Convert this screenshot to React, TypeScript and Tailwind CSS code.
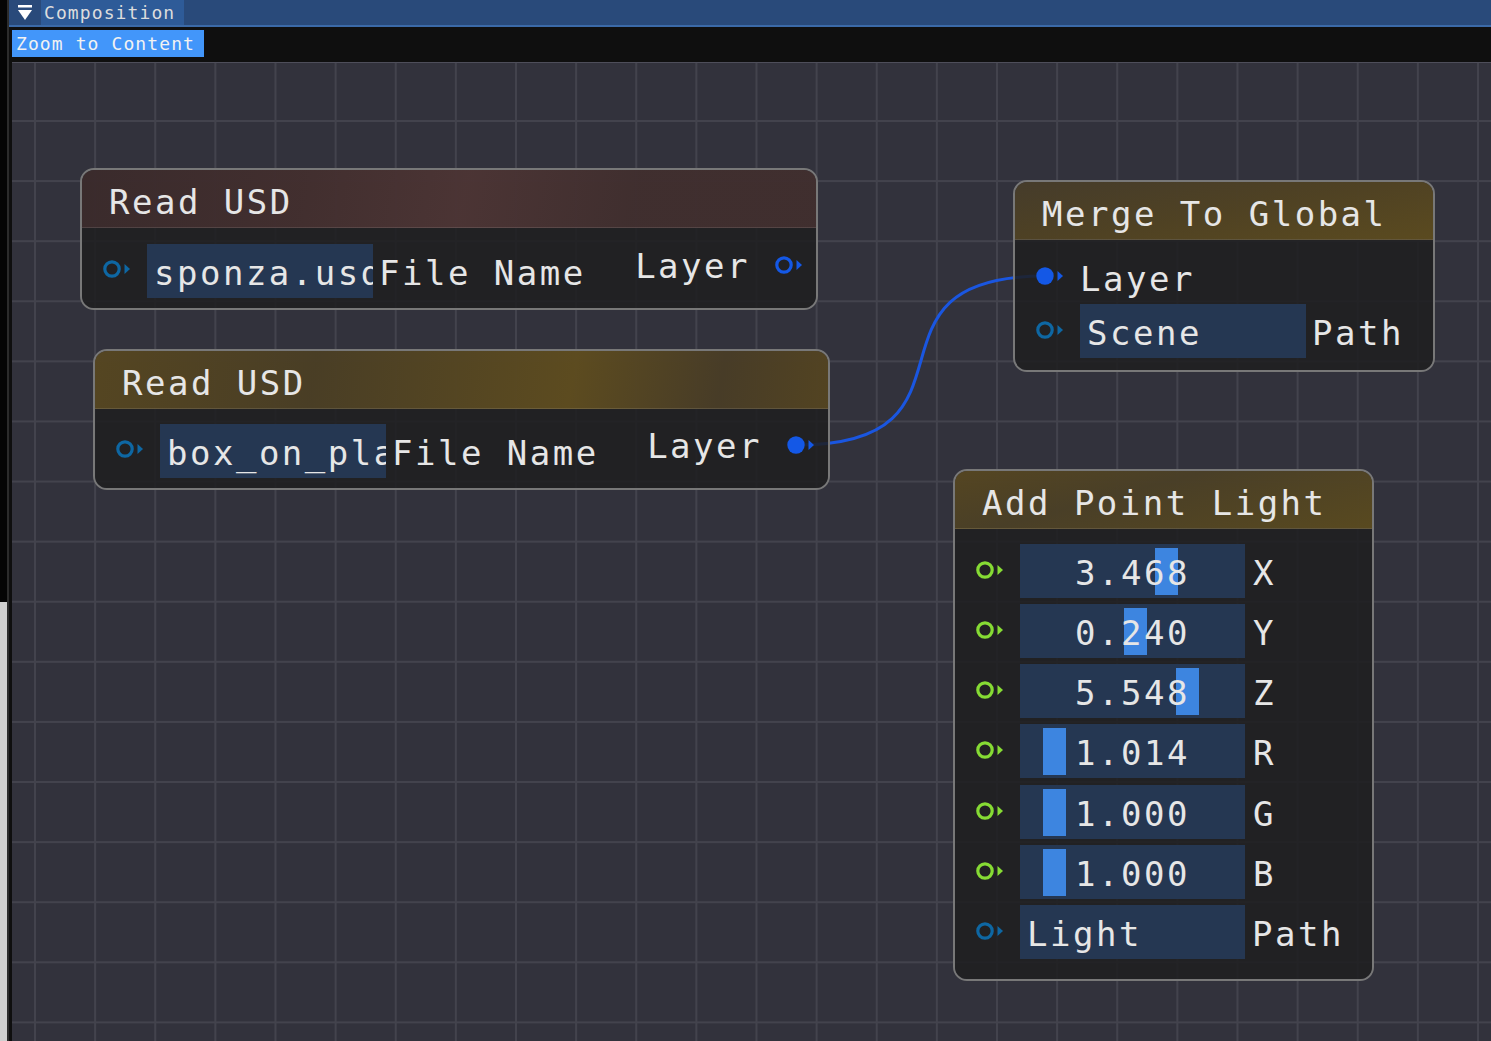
import React from "react";

const txt = "text-[34px] leading-[34px] tracking-[2.5px] text-[#e6e6e6] whitespace-nowrap";

function Pin({ color, filled, className = "" }: { color: string; filled?: boolean; className?: string }) {
    return (
        <svg width="28" height="20" viewBox="0 0 28 20" className={`shrink-0 ${className}`}>
            {filled ? (
                <circle cx="9" cy="10" r="8.7" fill={color} />
            ) : (
                <circle cx="9" cy="10" r="7.2" fill="none" stroke={color} strokeWidth="3.2" />
            )}
            <path d="M21.5 5 L27 10 L21.5 15 Z" fill={color} />
        </svg>
    );
}

function Node({
    className,
    header,
    title,
    bodyClass,
    children,
}: {
    className: string;
    header: string;
    title: string;
    bodyClass: string;
    children: React.ReactNode;
}) {
    return (
        <div className={`absolute rounded-[14px] border-2 border-[#787878] overflow-hidden flex flex-col ${className}`}>
            <div className={`h-[58px] shrink-0 border-b border-[#ffffff1c] pl-[27px] pt-[15px] ${header}`}>
                <span className={txt}>{title}</span>
            </div>
            <div className={`flex-1 bg-[rgba(30,30,32,0.86)] ${bodyClass}`}>{children}</div>
        </div>
    );
}

function ReadRow({ file }: { file: string }) {
    return (
        <div className="h-[54px] flex items-center pl-[21px]">
            <Pin color="#0e67a3" className="-translate-y-[2px]" />
            <div className="ml-[16px] w-[226px] h-full shrink-0 bg-[#253752] flex items-center pl-[7px]">
                <span className={`${txt} leading-[50px] block w-full overflow-hidden translate-y-[2px]`}>{file}</span>
            </div>
            <span className={`${txt} ml-[6px] translate-y-[2px]`}>File Name</span>
            <div className="ml-auto flex items-center pr-[13px] -translate-y-[6px]">
                <span className={`${txt} translate-y-[1px]`}>Layer</span>
                <Pin color="#1458e6" filled={file.startsWith("box")} className="ml-[25px]" />
            </div>
        </div>
    );
}

const lightRows = [
    { v: "3.468", l: "X", g: 135 },
    { v: "0.240", l: "Y", g: 104 },
    { v: "5.548", l: "Z", g: 156 },
    { v: "1.014", l: "R", g: 23 },
    { v: "1.000", l: "G", g: 23 },
    { v: "1.000", l: "B", g: 23 },
];

export default function App() {
    return (
        <div className="w-[1491px] h-[1041px] flex bg-[#0f0f0f] overflow-hidden font-['DejaVu_Sans_Mono',monospace]">
            <div className="w-[7px] shrink-0 flex flex-col">
                <div className="h-[602px] bg-[#050505]" />
                <div className="flex-1 bg-[#cfcfcf]" />
            </div>
            <div className="w-[2px] shrink-0 bg-[#2c2c2c]" />

            <div className="flex-1 min-w-0 flex flex-col">
                <div className="h-[27px] shrink-0 bg-[#294a7a] border-b-2 border-[#3b6aa8] flex">
                    <div className="w-[32px] flex items-center justify-center">
                        <svg width="14" height="16" viewBox="0 0 14 16">
                            <rect x="0" y="0" width="14" height="2.5" fill="#ffffff" />
                            <path d="M0 5 L14 5 L7 15 Z" fill="#ffffff" />
                        </svg>
                    </div>
                    <div className="w-[143px] bg-[#2e5b98] flex items-center pl-[3px] text-[18px] tracking-[1.1px] text-[#dddddd]">
                        Composition
                    </div>
                </div>

                <div className="h-[35px] shrink-0 pl-[3px] pt-[3px]">
                    <button className="h-[27px] w-[192px] bg-[#4296fa] flex items-center pl-[4px] text-[18px] tracking-[1.1px] text-[#f2f2f2]">
                        Zoom to Content
                    </button>
                </div>

                <div className="relative flex-1 ml-[3px] bg-[#32323c] shadow-[inset_0_1px_0_#4e4e5a] bg-[linear-gradient(to_right,#43434d_2px,transparent_2px),linear-gradient(to_bottom,#43434d_2px,transparent_2px)] bg-size-[60.14px_60.1px] bg-position-[22px_58px]">
                    <svg className="absolute inset-0" width="1479" height="979" viewBox="12 62 1479 979">
                        <path d="M797 445 C 997 445, 845 276, 1045 276" fill="none" stroke="#1a56e0" strokeWidth="3" />
                    </svg>

                    <Node
                        className="left-[68px] top-[106px] w-[738px] h-[142px]"
                        header="bg-[linear-gradient(100deg,rgba(58,42,43,0.95)_0%,rgba(66,46,46,0.95)_30%,rgba(76,52,52,0.95)_52%,rgba(64,46,46,0.95)_75%,rgba(64,46,46,0.95)_100%)]"
                        title="Read USD"
                        bodyClass="pt-[16px]"
                    >
                        <ReadRow file="sponza.usd" />
                    </Node>

                    <Node
                        className="left-[81px] top-[287px] w-[737px] h-[141px]"
                        header="bg-[linear-gradient(100deg,rgba(86,70,32,0.95)_0%,rgba(74,62,36,0.95)_30%,rgba(94,76,30,0.95)_65%,rgba(72,60,38,0.95)_85%,rgba(84,68,32,0.95)_100%)]"
                        title="Read USD"
                        bodyClass="pt-[15px]"
                    >
                        <ReadRow file="box_on_plane.usd" />
                    </Node>

                    <Node
                        className="left-[1001px] top-[118px] w-[422px] h-[192px]"
                        header="bg-[linear-gradient(170deg,rgba(70,60,42,0.95)_0%,rgba(80,66,34,0.95)_50%,rgba(92,75,30,0.95)_100%)]"
                        title="Merge To Global"
                        bodyClass="pt-[10px]"
                    >
                        <div className="h-[54px] flex items-center pl-[21px]">
                            <Pin color="#1458e6" filled className="-translate-y-[1px]" />
                            <span className={`${txt} ml-[16px] translate-y-[2px]`}>Layer</span>
                        </div>
                        <div className="h-[54px] flex items-center pl-[21px]">
                            <Pin color="#0e67a3" className="-translate-y-[1px]" />
                            <div className="ml-[16px] w-[226px] h-full shrink-0 bg-[#253752] flex items-center pl-[7px]">
                                <span className={`${txt} translate-y-[2px]`}>Scene</span>
                            </div>
                            <span className={`${txt} ml-[6px] translate-y-[2px]`}>Path</span>
                        </div>
                    </Node>

                    <Node
                        className="left-[941px] top-[407px] w-[421px] h-[512px]"
                        header="bg-[linear-gradient(165deg,rgba(86,70,32,0.95)_0%,rgba(74,63,38,0.95)_40%,rgba(90,74,30,0.95)_100%)]"
                        title="Add Point Light"
                        bodyClass="pt-[15px] flex flex-col gap-[6.17px]"
                    >
                        {lightRows.map((r, i) => (
                            <div key={i} className="h-[54px] shrink-0 flex items-center pl-[21px]">
                                <Pin color="#86db34" className="-translate-y-[1px]" />
                                <div className="relative ml-[16px] w-[225px] h-full shrink-0 bg-[#253752] flex items-center justify-center">
                                    <div
                                        className="absolute top-[4px] bottom-[3px] w-[23px] bg-[#3d85e0]"
                                        style={{ left: r.g }}
                                    />
                                    <span className={`${txt} relative translate-y-[2px]`}>{r.v}</span>
                                </div>
                                <span className={`${txt} ml-[8px] translate-y-[2px]`}>{r.l}</span>
                            </div>
                        ))}
                        <div className="h-[54px] shrink-0 flex items-center pl-[21px]">
                            <Pin color="#0e67a3" className="-translate-y-[1px]" />
                            <div className="ml-[16px] w-[225px] h-full shrink-0 bg-[#253752] flex items-center pl-[7px]">
                                <span className={`${txt} translate-y-[2px]`}>Light</span>
                            </div>
                            <span className={`${txt} ml-[7px] translate-y-[2px]`}>Path</span>
                        </div>
                    </Node>
                </div>
            </div>
        </div>
    );
}
